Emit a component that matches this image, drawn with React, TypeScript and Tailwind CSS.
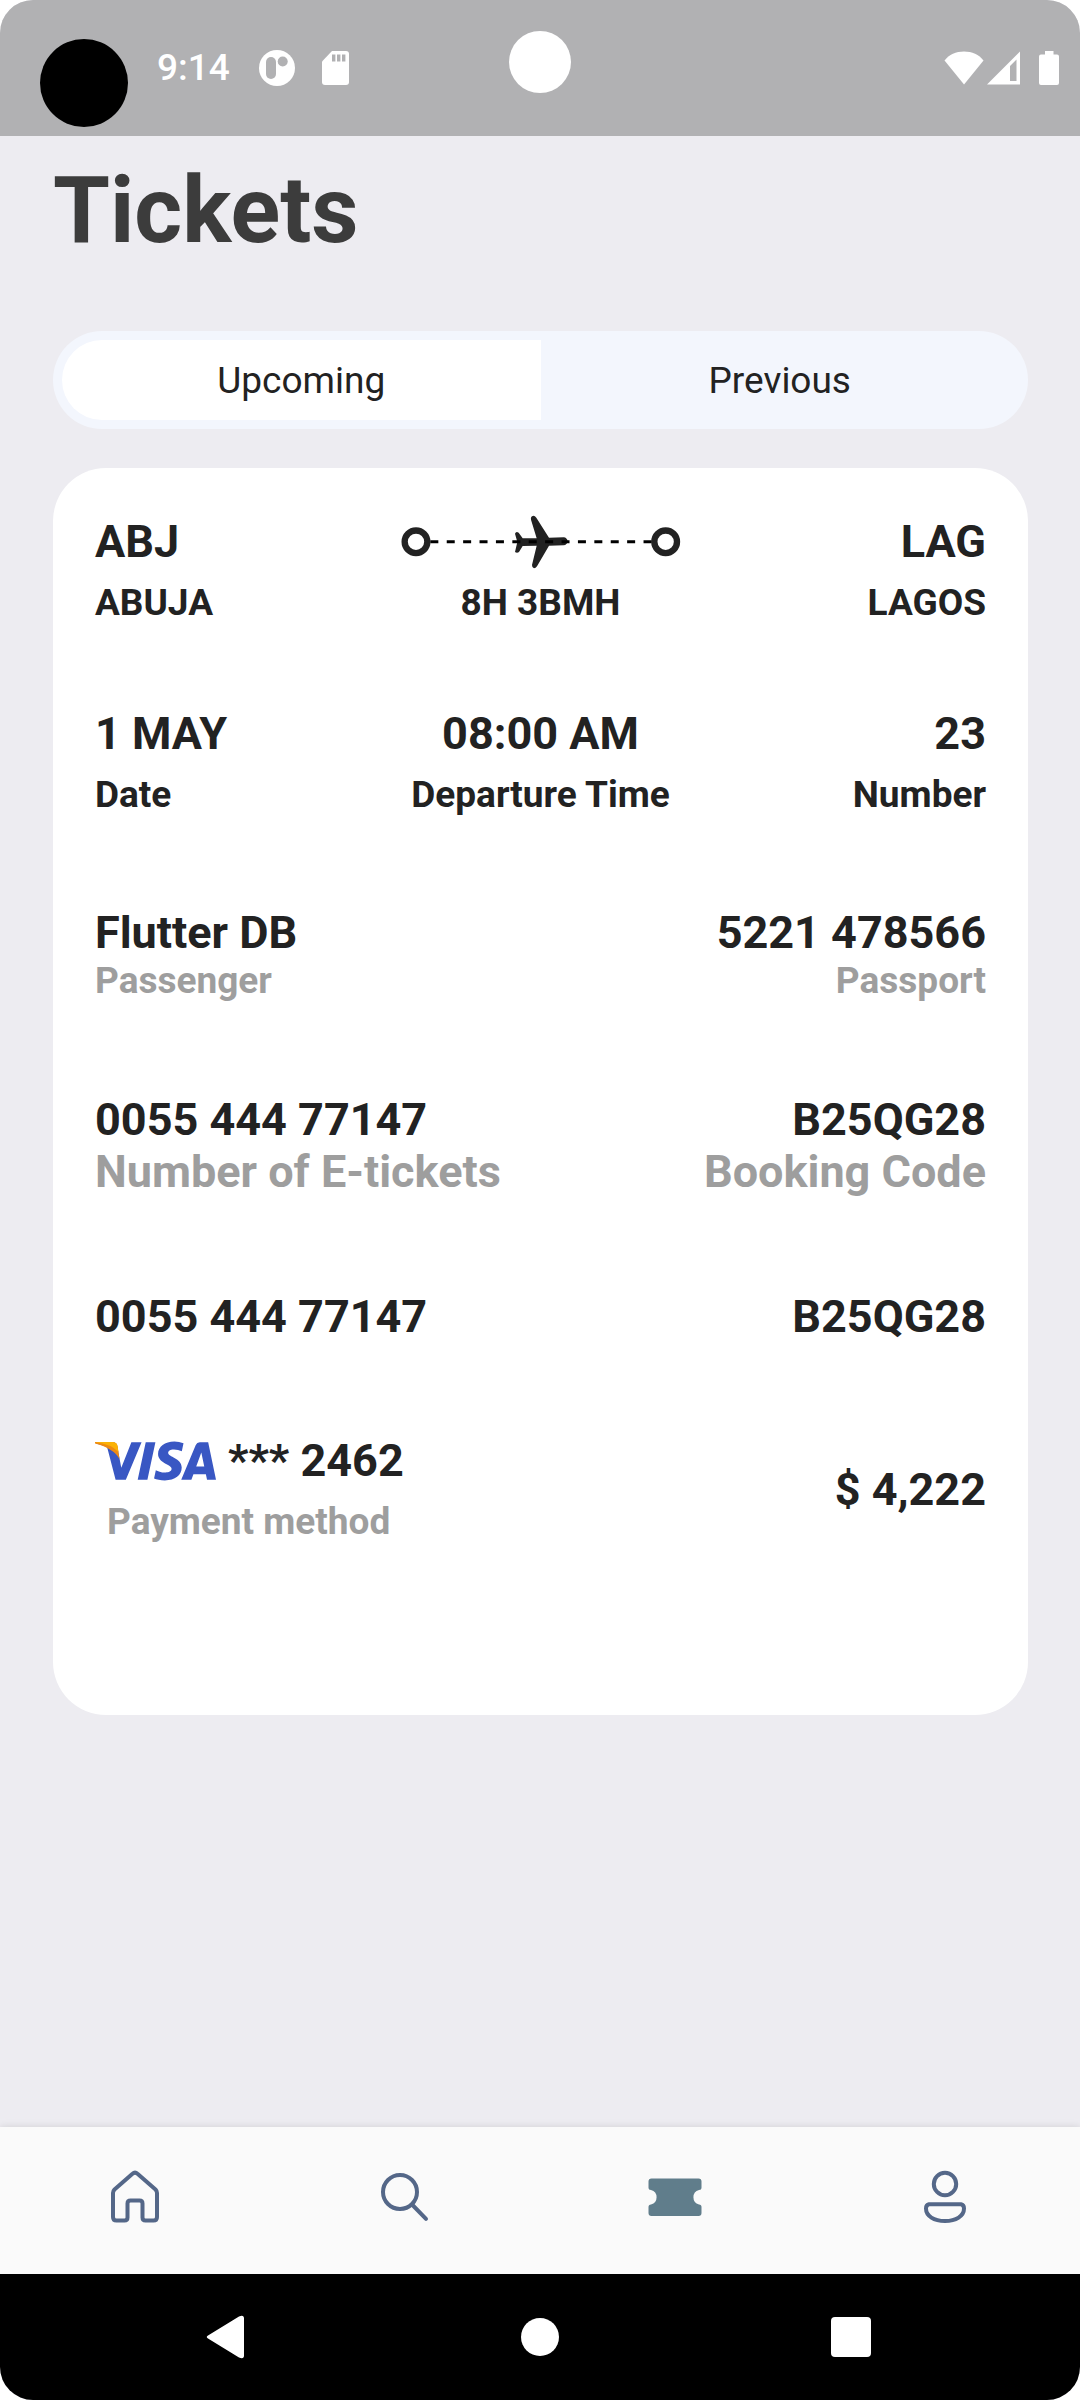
import { useState, type ReactNode } from "react";
import { SiVisa } from "react-icons/si";

const MUTED = "text-[#9e9e9e]";

function StatusBar() {
  return (
    <header className="relative flex h-[136px] shrink-0 items-center justify-between bg-[#b1b1b3] pl-10 pr-[21px] text-white">
      <div className="flex items-center">
        <span className="mt-[30px] size-[88px] rounded-full bg-black" />
        <span className="ml-[29px] text-[37px] leading-[44px] font-medium">9:14</span>
        <svg className="ml-[29px] h-9 w-9" viewBox="0 0 36 36" aria-hidden="true">
          <circle cx="18" cy="18" r="18" fill="#fff" />
          <rect x="7" y="7" width="10" height="22" rx="5" fill="#b1b1b3" />
          <circle cx="23.7" cy="11.5" r="5" fill="#b1b1b3" />
        </svg>
        <svg className="ml-[27px] h-[34px] w-[27px]" viewBox="0 0 27 34" aria-hidden="true">
          <path d="M10 0H24a3 3 0 0 1 3 3V31a3 3 0 0 1-3 3H3a3 3 0 0 1-3-3V10.5Z" fill="#fff" />
          <path d="M10 3.5h3.4v7H10zM15 3.5h3.4v7H15zM20 3.5h3.4v7H20z" fill="#b1b1b3" />
        </svg>
      </div>
      <span className="absolute top-[31px] left-1/2 size-[62px] -translate-x-1/2 rounded-full bg-white" />
      <div className="flex items-center">
        <svg className="h-[34px] w-10" viewBox="0 0 40 34" aria-hidden="true">
          <path d="M20 33.5 .5 9.5C5 3.500 12 .5 20 .5S35 3.500 39.500 9.500Z" fill="#fff" />
        </svg>
        <svg className="ml-[3px] h-[34px] w-[33px]" viewBox="0 0 33 34" aria-hidden="true">
          <path fillRule="evenodd" d="M33 .5V33.500H0ZM23 15V30H29.500V8.500Z" fill="#fff" />
        </svg>
        <svg className="ml-[19px] h-[34px] w-5" viewBox="0 0 20 34" aria-hidden="true">
          <path d="M6 0h8.500v3.500H18a2 2 0 0 1 2 2V32a2 2 0 0 1-2 2H2a2 2 0 0 1-2-2V5.500a2 2 0 0 1 2-2h4Z" fill="#fff" />
        </svg>
      </div>
    </header>
  );
}

function Tabs() {
  const [active, setActive] = useState(0);
  return (
    <div role="tablist" className="flex h-[98px] rounded-full bg-[#f3f6fd] p-[9px]">
      {["Upcoming", "Previous"].map((label, i) => (
        <button
          key={label}
          type="button"
          role="tab"
          aria-selected={active === i}
          onClick={() => setActive(i)}
          className={`flex-1 pt-0.5 text-[37px] leading-[44px] ${i === 0 ? "rounded-l-full" : "rounded-r-full"} ${
            active === i ? "bg-white" : ""
          }`}
        >
          {label}
        </button>
      ))}
    </div>
  );
}

function Big({ children, className = "" }: { children: ReactNode; className?: string }) {
  return <p className={`text-[45px] leading-[52px] ${className}`}>{children}</p>;
}

function Small({ children, className = "" }: { children: ReactNode; className?: string }) {
  return <p className={`text-[37px] leading-[44px] ${className}`}>{children}</p>;
}

function Route() {
  return (
    <svg className="h-[54px] w-[280px] shrink-0" viewBox="88 74 840 162" aria-label="Flight">
      <g fill="none" stroke="#222" strokeWidth="19">
        <circle cx="133" cy="154.500" r="34" />
        <circle cx="882" cy="154.500" r="34" />
      </g>
      <path
        fill="#222"
        d="M430 130Q433 122 441 127L453 144H495L478 88Q476 77 485 76Q490 76 494 82L532 142L576 141Q586 142 588 153Q586 164 576 165L532 166L496 228Q492 234 487 234Q481 233 481 224L495 166L453 167L442 185Q436 190 430 185L437 155Z"
      />
      <path d="M176 154.500H840" stroke="#000" strokeWidth="9" strokeDasharray="24 25.200" />
    </svg>
  );
}

function VisaLogo() {
  return (
    <span className="relative block h-10 w-[122px]">
      <SiVisa viewBox="0 8 24 8" className="h-10 w-[122px] text-[#3957c3]" title="Visa" />
      <svg className="absolute inset-0 h-10 w-[122px]" viewBox="0 0 122 40" aria-hidden="true">
        <path d="M0 1H18Q22 1.500 22.500 5L24.500 18Q19 7.500 0 2.500Z" fill="#ee8a12" />
        <path d="M0 1H18Q22 1.500 22.500 5L23.500 11Q16 3 0 1Z" fill="#fbb205" />
      </svg>
    </span>
  );
}

function Ticket() {
  return (
    <section className="mt-[39px] rounded-[53px] bg-white px-[42px] pt-12 pb-[171px] font-bold">
      <div className="grid grid-cols-3">
        <div className="flex flex-col gap-[13px]">
          <Big>ABJ</Big>
          <Small>ABUJA</Small>
        </div>
        <div className="flex flex-col items-center gap-[13px]">
          <div className="flex h-[52px] items-center">
            <Route />
          </div>
          <Small>8H 3BMH</Small>
        </div>
        <div className="flex flex-col gap-[13px] text-right">
          <Big>LAG</Big>
          <Small>LAGOS</Small>
        </div>
      </div>
      <div className="mt-[83px] grid grid-cols-3">
        <div className="flex flex-col gap-[13px]">
          <Big>1 MAY</Big>
          <Small>Date</Small>
        </div>
        <div className="flex flex-col gap-[13px] text-center">
          <Big>08:00 AM</Big>
          <Small>Departure Time</Small>
        </div>
        <div className="flex flex-col gap-[13px] text-right">
          <Big>23</Big>
          <Small>Number</Small>
        </div>
      </div>
      <div className="mt-[90px] flex justify-between">
        <div>
          <Big>Flutter DB</Big>
          <Small className={MUTED}>Passenger</Small>
        </div>
        <div className="text-right">
          <Big>5221 478566</Big>
          <Small className={MUTED}>Passport</Small>
        </div>
      </div>
      <div className="mt-[91px] flex justify-between">
        <div>
          <Big>0055 444 77147</Big>
          <Big className={MUTED}>Number of E-tickets</Big>
        </div>
        <div className="text-right">
          <Big>B25QG28</Big>
          <Big className={MUTED}>Booking Code</Big>
        </div>
      </div>
      <div className="mt-[93px] flex justify-between">
        <Big>0055 444 77147</Big>
        <Big>B25QG28</Big>
      </div>
      <div className="mt-[92px] flex items-center justify-between">
        <div className="flex flex-col gap-[13px]">
          <div className="flex items-center gap-[11px]">
            <VisaLogo />
            <Big>*** 2462</Big>
          </div>
          <Small className="pl-3 text-[#9e9e9e]">Payment method</Small>
        </div>
        <Big>$ 4,222</Big>
      </div>
    </section>
  );
}

function NavItem({ label, current, children }: { label: string; current?: boolean; children: ReactNode }) {
  return (
    <button
      type="button"
      aria-label={label}
      aria-current={current ? "page" : undefined}
      className="flex flex-1 items-center justify-center pb-2"
    >
      <svg
        className="size-[60px]"
        viewBox="0 0 60 60"
        fill="none"
        stroke="#546788"
        strokeWidth="4"
        strokeLinecap="round"
        strokeLinejoin="round"
      >
        {children}
      </svg>
    </button>
  );
}

function BottomNav() {
  return (
    <nav className="flex h-[147px] shrink-0 bg-[#fafafa] shadow-[0_0_8px_rgba(0,0,0,0.12)]">
      <NavItem label="Home">
        <path d="M27.500 6.800Q30 4.500 32.500 6.800L50.500 22.500Q52 24 52 26V50Q52 53.500 48.500 53.500H40.500Q37.500 53.500 37.500 50.500V36.500Q37.500 33.500 34.500 33.500H25.500Q22.500 33.500 22.500 36.500V50.500Q22.500 53.500 19.500 53.500H11.500Q8 53.500 8 50V26Q8 24 9.500 22.500Z" />
      </NavItem>
      <NavItem label="Search">
        <circle cx="25" cy="25" r="17" />
        <path d="M37.500 38 51 51.800" />
      </NavItem>
      <NavItem label="Tickets" current>
        <path
          stroke="none"
          fill="#607d8b"
          d="M6.500 11.500H53.500Q56.500 11.500 56.500 14.500V20.500Q56.500 23 54 23A7.500 7.500 0 0 0 54 37.500Q56.500 37.500 56.500 40V46Q56.500 49 53.500 49H6.500Q3.500 49 3.500 46V40Q3.500 37.500 6 37.500A7.500 7.500 0 0 0 6 23Q3.500 23 3.500 20.500V14.500Q3.500 11.500 6.500 11.500Z"
        />
      </NavItem>
      <NavItem label="Profile">
        <circle cx="30" cy="17" r="11.200" />
        <path d="M14 37.200H46Q49 37.800 49 41.500C49 49 41 54 30 54S11 49 11 41.500Q11 37.800 14 37.200Z" />
      </NavItem>
    </nav>
  );
}

function SystemNav() {
  return (
    <footer className="flex h-[126px] shrink-0 items-center justify-between bg-black pr-[209px] pl-[205px]">
      <button type="button" aria-label="Back">
        <svg className="h-11 w-11" viewBox="-1 0 44 44" aria-hidden="true">
          <path d="M2 20.500 33 1.500Q38 -.5 38 3.500V40.500Q38 44.500 33 42.500L2 23.500Q-.5 22 2 20.500Z" fill="#fff" />
        </svg>
      </button>
      <button type="button" aria-label="Home" className="size-[38px] rounded-full bg-white" />
      <button type="button" aria-label="Overview" className="size-10 rounded-[4px] bg-white" />
    </footer>
  );
}

export default function App() {
  return (
    <div className="flex min-h-screen flex-col overflow-hidden rounded-[33px] bg-[#edecf1] font-[Roboto,sans-serif] text-[#222222]">
      <StatusBar />
      <main className="flex-1 pt-[21px] pr-[52px] pb-10 pl-[53px]">
        <h1 className="text-[92px] leading-[108px] font-bold text-[#3c3c3c]">Tickets</h1>
        <div className="mt-[66px]">
          <Tabs />
        </div>
        <Ticket />
      </main>
      <BottomNav />
      <SystemNav />
    </div>
  );
}
